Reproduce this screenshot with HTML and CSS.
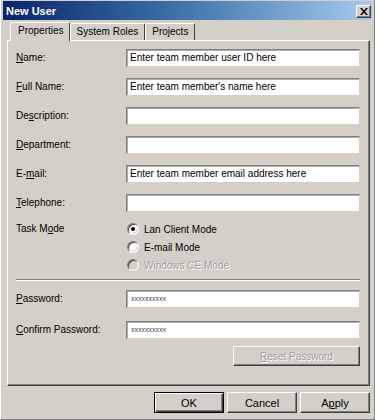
FILE: index.html
```html
<!DOCTYPE html>
<html lang="en">

<head>
    <meta charset="UTF-8">
    <meta name="viewport" content="width=device-width, initial-scale=1.0">
    <title>New User</title>
    <link rel="stylesheet" href="styles.css">
</head>

<body>
    <div class="window">
        <div class="titlebar">
            <span class="title">New User</span>
            <span class="close-btn">
                <svg width="8" height="7" viewBox="0 0 8 7">
                    <path d="M0 0h2l2 2.5 2-2.5h2l-3 3.5 3 3.5h-2l-2-2.5-2 2.5h-2l3-3.5z" fill="#000"/>
                </svg>
            </span>
        </div>

        <div class="tabs">
            <div class="tab active">Properties</div>
            <div class="tab">System Roles</div>
            <div class="tab">Projects</div>
        </div>

        <div class="panel">
            <div class="form">
                <label class="row-label"><u>N</u>ame:</label>
                <div class="field">Enter team member user ID here</div>

                <label class="row-label"><u>F</u>ull Name:</label>
                <div class="field">Enter team member's name here</div>

                <label class="row-label">De<u>s</u>cription:</label>
                <div class="field"></div>

                <label class="row-label"><u>D</u>epartment:</label>
                <div class="field"></div>

                <label class="row-label">E-<u>m</u>ail:</label>
                <div class="field">Enter team member email address here</div>

                <label class="row-label"><u>T</u>elephone:</label>
                <div class="field"></div>
            </div>

            <div class="task-mode">
                <label class="row-label task-label">Task M<u>o</u>de</label>
                <div class="radios">
                    <div class="radio-row"><span class="radio checked"></span>Lan Client Mode</div>
                    <div class="radio-row"><span class="radio"></span>E-mail Mode</div>
                    <div class="radio-row disabled"><span class="radio"></span>Windows CE Mode</div>
                </div>
            </div>

            <div class="separator"></div>

            <div class="form pw-form">
                <label class="row-label"><u>P</u>assword:</label>
                <div class="field pw">xxxxxxxxxx</div>

                <label class="row-label"><u>C</u>onfirm Password:</label>
                <div class="field pw">xxxxxxxxxx</div>
            </div>

            <div class="reset-row">
                <span class="btn reset-btn disabled"><u>R</u>eset Password</span>
            </div>
        </div>

        <div class="dialog-buttons">
            <span class="btn default">OK</span>
            <span class="btn">Cancel</span>
            <span class="btn">A<u>p</u>ply</span>
        </div>
    </div>
</body>

</html>
```

FILE: styles.css
```css
body {
    margin: 0;
    background-color: #d4d0c8;
    font-family: "Liberation Sans", Arial, sans-serif;
    font-size: 10px;
    color: #000;
}

.window {
    width: 375px;
    height: 420px;
    box-sizing: border-box;
    padding: 1px 2px 2px 2px;
    border-left: 1px solid #fff;
    border-right: 1px solid #808080;
    border-bottom: 1px solid #808080;
}

.titlebar {
    height: 18px;
    display: flex;
    align-items: center;
    justify-content: space-between;
    padding: 1px 1px 0 3px;
    background: linear-gradient(to right, #0a246a, #3a6ea5 45%, #a6caf0);
}

.title {
    color: #fff;
    font-weight: bold;
    font-size: 11px;
}

.close-btn {
    width: 15px;
    height: 13px;
    box-sizing: border-box;
    display: flex;
    align-items: center;
    justify-content: center;
    background-color: #d4d0c8;
    border: 1px solid;
    border-color: #fff #404040 #404040 #fff;
    box-shadow: inset -1px -1px #808080;
}

/* tab strip */
.tabs {
    display: flex;
    margin-top: 2px;
    padding-left: 7px;
    height: 18px;
    align-items: flex-end;
}

.tab {
    height: 17px;
    box-sizing: border-box;
    padding: 0 6px;
    line-height: 15px;
    border-left: 1px solid #fff;
    border-top: 1px solid #fff;
    border-right: 1px solid #404040;
    border-top-left-radius: 2px;
    border-top-right-radius: 2px;
}

.tab.active {
    height: 19px;
    margin-bottom: -1px;
    padding: 0 5px 0 7px;
    position: relative;
    background-color: #d4d0c8;
}

.panel {
    margin: 0 2px 0 4px;
    height: 346px;
    box-sizing: border-box;
    border: 1px solid;
    border-color: #fff #404040 #404040 #fff;
    box-shadow: inset -1px -1px #808080;
    padding: 8px 9px 0 8px;
}

.form {
    display: grid;
    grid-template-columns: 110px 234px;
    grid-auto-rows: 18px;
    row-gap: 11px;
    align-items: center;
}

.row-label {
    line-height: 12px;
}

.field {
    height: 18px;
    box-sizing: border-box;
    background-color: #fff;
    border: 1px solid;
    border-color: #808080 #d4d0c8 #d4d0c8 #808080;
    box-shadow: inset 1px 1px #b0aca4;
    padding: 0 3px;
    line-height: 16px;
    white-space: nowrap;
    overflow: hidden;
}

.task-mode {
    display: grid;
    grid-template-columns: 110px 234px;
    margin-top: 8px;
}

.task-label {
    line-height: 18px;
}

.radios {
    display: flex;
    flex-direction: column;
}

.radio-row {
    height: 18px;
    display: flex;
    align-items: center;
    gap: 5px;
    padding-left: 1px;
}

.radio {
    width: 12px;
    height: 12px;
    box-sizing: border-box;
    border-radius: 50%;
    background-color: #fff;
    border: 1px solid;
    border-color: #808080 #fff #fff #808080;
    box-shadow: inset 1px 1px #404040, inset -1px -1px #d4d0c8;
    display: flex;
    align-items: center;
    justify-content: center;
}

.radio.checked::after {
    content: "";
    width: 4px;
    height: 4px;
    border-radius: 50%;
    background-color: #000;
}

.radio-row.disabled {
    color: #a0a0a0;
    text-shadow: 1px 1px #fff;
}

.radio-row.disabled .radio {
    background-color: #d4d0c8;
}

.separator {
    margin-top: 5px;
    height: 0;
    border-top: 1px solid #808080;
    border-bottom: 1px solid #fff;
}

.pw-form {
    margin-top: 9px;
    row-gap: 13px;
}

.field.pw {
    font-size: 7px;
    color: #404060;
    padding-left: 4px;
}

.reset-row {
    display: flex;
    justify-content: flex-end;
    margin-top: 7px;
}

.btn {
    height: 21px;
    box-sizing: border-box;
    display: flex;
    align-items: center;
    justify-content: center;
    background-color: #d4d0c8;
    border: 1px solid;
    border-color: #fff #404040 #404040 #fff;
    box-shadow: inset -1px -1px #808080;
}

.reset-btn {
    width: 127px;
    height: 20px;
}

.btn.disabled {
    color: #a0a0a0;
    text-shadow: 1px 1px #fff;
}

.dialog-buttons {
    display: flex;
    justify-content: flex-end;
    gap: 3px;
    margin: 6px 2px 0 0;
}

.dialog-buttons .btn {
    width: 70px;
    font-size: 11px;
}

.btn.default {
    border: 1px solid #000;
    box-shadow: inset 1px 1px #fff, inset -1px -1px #404040, inset -2px -2px #808080;
}
```
